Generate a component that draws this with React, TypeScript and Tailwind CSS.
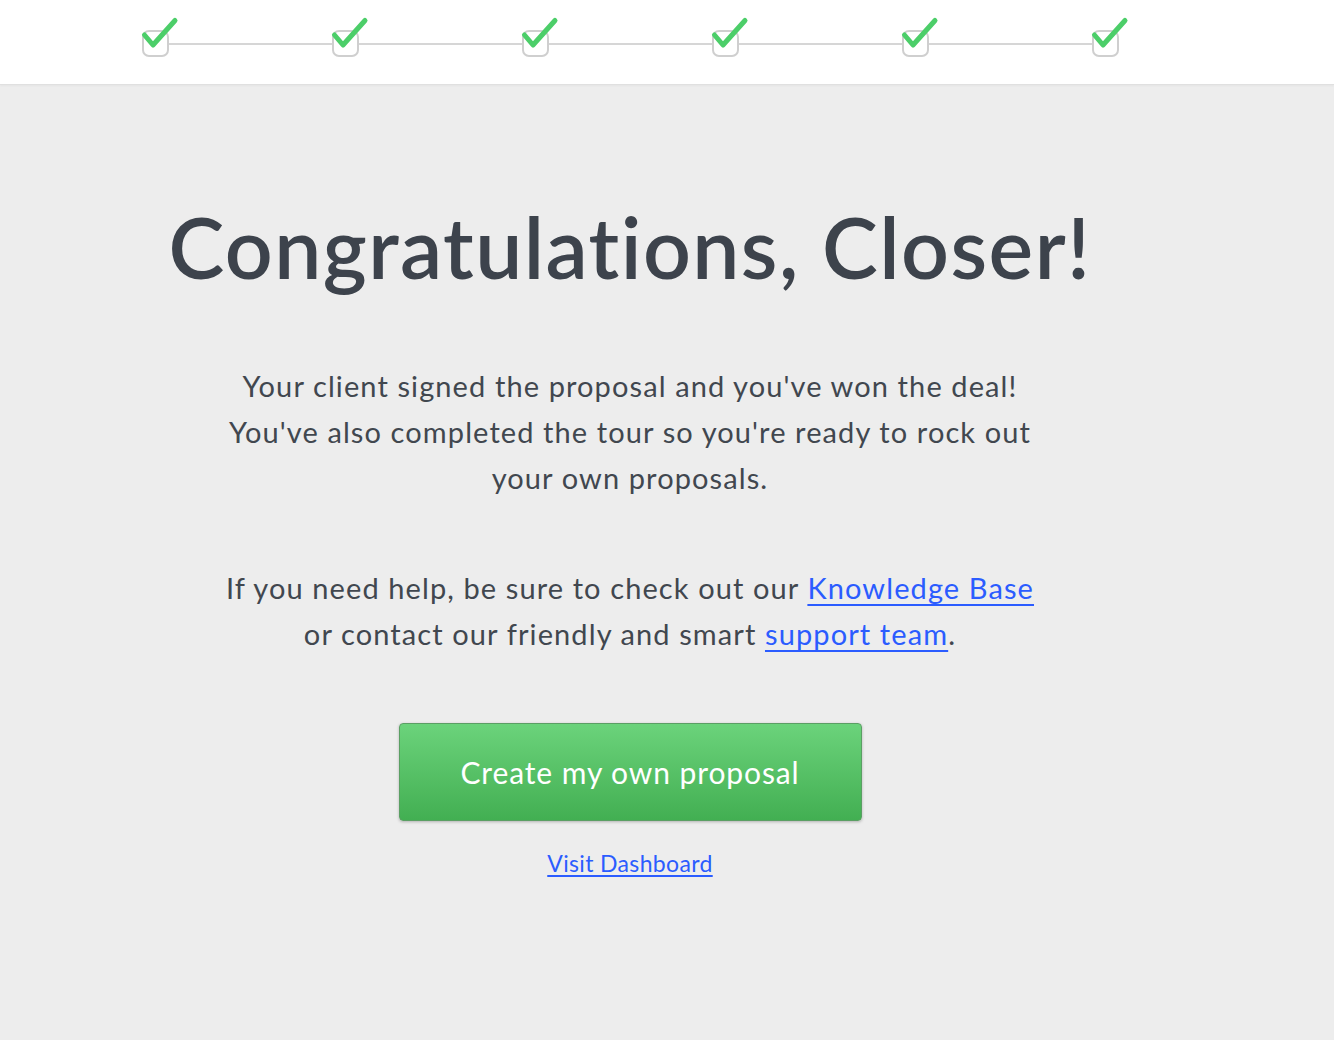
import React from "react";

function Step({ last }: { last?: boolean }) {
  return (
    <div className="flex items-center">
      <div className="relative w-[27px] h-[27px] shrink-0">
        <div className="absolute inset-0 rounded-[7px] border-2 border-[#cfcfcf] bg-white" />
        <svg
          className="absolute left-[-2px] top-[-14px] overflow-visible"
          width="40"
          height="40"
          viewBox="0 0 40 40"
        >
          <path
            d="M4.5 19 L13 29 L35 4.5"
            fill="none"
            stroke="#4cce69"
            strokeWidth="5"
            strokeLinecap="round"
            strokeLinejoin="round"
          />
        </svg>
      </div>
      {!last && <div className="w-[163px] h-[2px] bg-[#d6d6d6]" />}
    </div>
  );
}

export default function App() {
  const font = { fontFamily: "Lato, 'Open Sans', sans-serif" };
  return (
    <div className="min-h-[1040px] bg-[#ededed]" style={font}>
      <div className="h-[85px] bg-white border-b border-[#e0e0e0] shadow-[0_1px_2px_rgba(0,0,0,0.04)]">
        <div className="w-[1260px] flex justify-center pt-[30px]">
          <div className="flex">
            {[0, 1, 2, 3, 4, 5].map((i) => (
              <Step key={i} last={i === 5} />
            ))}
          </div>
        </div>
      </div>
      <div className="w-[1260px] flex flex-col items-center text-center text-[#3d434c]">
        <h1 className="mt-[112px] text-[84px] leading-[100px] font-semibold tracking-[0.017em]">
          Congratulations, Closer!
        </h1>
        <p className="mt-[66px] text-[29px] leading-[46px] tracking-[0.038em] text-[#41474f]">
          Your client signed the proposal and you've won the deal!
          <br />
          You've also completed the tour so you're ready to rock out
          <br />
          your own proposals.
        </p>
        <p className="mt-[64px] text-[29px] leading-[46px] tracking-[0.038em] text-[#41474f]">
          If you need help, be sure to check out our{" "}
          <a href="#" className="text-[#2b5cff] underline underline-offset-[5px] decoration-[1.5px]">
            Knowledge Base
          </a>
          <br />
          or contact our friendly and smart{" "}
          <a href="#" className="text-[#2b5cff] underline underline-offset-[5px] decoration-[1.5px]">
            support team
          </a>
          .
        </p>
        <button className="mt-[66px] w-[463px] h-[98px] rounded-[4px] border border-[#5b9f64] bg-gradient-to-b from-[#6bd37b] to-[#42af52] shadow-[0_1px_3px_rgba(0,0,0,0.25)] text-white text-[30px] tracking-[0.03em]">
          Create my own proposal
        </button>
        <a href="#" className="mt-[25px] text-[23px] tracking-[0.015em] text-[#2b5cff] underline underline-offset-[3px]">
          Visit Dashboard
        </a>
      </div>
    </div>
  );
}
